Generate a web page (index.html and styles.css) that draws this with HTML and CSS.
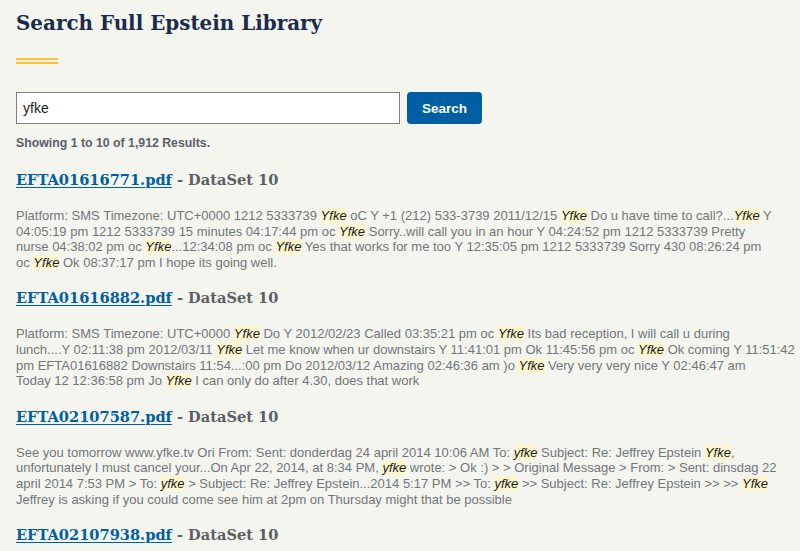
FILE: index.html
```html
<!DOCTYPE html>
<html lang="en">
<head>
<meta charset="utf-8">
<title>Search Full Epstein Library</title>
<link rel="stylesheet" href="styles.css">
</head>
<body>
<main class="page">
  <h1 class="title">Search Full Epstein Library</h1>
  <div class="rule"></div>
  <form class="search">
    <input class="search-input" type="text" value="yfke">
    <button class="search-btn" type="button">Search</button>
  </form>
  <p class="count">Showing 1 to 10 of 1,912 Results.</p>

  <section class="result">
    <h2 class="result-title"><a href="#">EFTA01616771.pdf</a> - DataSet 10</h2>
    <p class="snippet">Platform: SMS Timezone: UTC+0000 1212 5333739 <mark>Yfke</mark> oC Y +1 (212) 533-3739 2011/12/15 <mark>Yfke</mark> Do u have time to call?...<mark>Yfke</mark> Y<br>04:05:19 pm 1212 5333739 15 minutes 04:17:44 pm oc <mark>Yfke</mark> Sorry..will call you in an hour Y 04:24:52 pm 1212 5333739 Pretty<br>nurse 04:38:02 pm oc <mark>Yfke</mark>...12:34:08 pm oc <mark>Yfke</mark> Yes that works for me too Y 12:35:05 pm 1212 5333739 Sorry 430 08:26:24 pm<br>oc <mark>Yfke</mark> Ok 08:37:17 pm I hope its going well.</p>
  </section>

  <section class="result">
    <h2 class="result-title"><a href="#">EFTA01616882.pdf</a> - DataSet 10</h2>
    <p class="snippet">Platform: SMS Timezone: UTC+0000 <mark>Yfke</mark> Do Y 2012/02/23 Called 03:35:21 pm oc <mark>Yfke</mark> Its bad reception, I will call u during<br>lunch....Y 02:11:38 pm 2012/03/11 <mark>Yfke</mark> Let me know when ur downstairs Y 11:41:01 pm Ok 11:45:56 pm oc <mark>Yfke</mark> Ok coming Y 11:51:42<br>pm EFTA01616882 Downstairs 11:54...:00 pm Do 2012/03/12 Amazing 02:46:36 am )o <mark>Yfke</mark> Very very very nice Y 02:46:47 am<br>Today 12 12:36:58 pm Jo <mark>Yfke</mark> I can only do after 4.30, does that work</p>
  </section>

  <section class="result">
    <h2 class="result-title"><a href="#">EFTA02107587.pdf</a> - DataSet 10</h2>
    <p class="snippet">See you tomorrow www.yfke.tv Ori From: Sent: donderdag 24 april 2014 10:06 AM To: <mark>yfke</mark> Subject: Re: Jeffrey Epstein <mark>Yfke</mark>,<br>unfortunately I must cancel your...On Apr 22, 2014, at 8:34 PM, <mark>yfke</mark> wrote: &gt; Ok :) &gt; &gt; Original Message &gt; From: &gt; Sent: dinsdag 22<br>april 2014 7:53 PM &gt; To: <mark>yfke</mark> &gt; Subject: Re: Jeffrey Epstein...2014 5:17 PM &gt;&gt; To: <mark>yfke</mark> &gt;&gt; Subject: Re: Jeffrey Epstein &gt;&gt; &gt;&gt; <mark>Yfke</mark><br>Jeffrey is asking if you could come see him at 2pm on Thursday might that be possible</p>
  </section>

  <section class="result">
    <h2 class="result-title"><a href="#">EFTA02107938.pdf</a> - DataSet 10</h2>
  </section>
</main>
</body>
</html>
```

FILE: styles.css
```css
html, body {
  margin: 0;
  padding: 0;
  background: #f5f5f0;
}

body {
  font-family: "Liberation Sans", Arial, sans-serif;
  color: #565c65;
}

.page {
  padding: 7px 4px 0 16px;
}

.title {
  font-family: "DejaVu Serif", "Liberation Serif", serif;
  font-weight: bold;
  font-size: 19.9px;
  line-height: 32px;
  color: #1b2b4b;
  margin: 0;
}

.rule {
  width: 42px;
  height: 2px;
  border-top: 2px solid #ffbe2e;
  border-bottom: 2px solid #ffbe2e;
  margin: 19px 0 28px 0;
}

.search {
  display: flex;
  gap: 7px;
  align-items: stretch;
  margin: 0;
}

.search-input {
  width: 384px;
  height: 32px;
  box-sizing: border-box;
  border: 1px solid #7d8085;
  background: #fff;
  font-family: "Liberation Sans", Arial, sans-serif;
  font-size: 14px;
  color: #1b1b1b;
  padding: 0 6px;
  margin: 0;
}

.search-btn {
  width: 75px;
  height: 32px;
  border: 0;
  border-radius: 4px;
  background: #005ea2;
  color: #fff;
  font-family: "Liberation Sans", Arial, sans-serif;
  font-weight: bold;
  font-size: 13.5px;
  padding: 0;
}

.count {
  font-weight: bold;
  font-size: 12.3px;
  color: #5c6066;
  margin: 12px 0 18px 0;
}

.result {
  margin: 0;
}

.result-title {
  font-family: "DejaVu Serif", "Liberation Serif", serif;
  font-weight: bold;
  font-size: 14.6px;
  line-height: 24px;
  color: #5c5f63;
  margin: 0 0 16px 0;
}

.result-title a {
  color: #005ea2;
  text-decoration: underline;
  text-decoration-thickness: 1px;
  text-underline-offset: 2px;
}

.snippet {
  font-size: 13px;
  line-height: 15.6px;
  color: #71767a;
  margin: 0 0 16px 0;
}

mark {
  background: #fdf6cf;
  color: #1b1b1b;
  font-style: italic;
}
```
